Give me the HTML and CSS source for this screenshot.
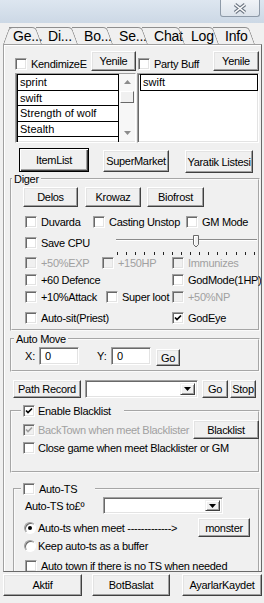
FILE: index.html
```html
<!DOCTYPE html>
<html lang="tr">

<head>
    <meta charset="UTF-8">
    <meta name="viewport" content="width=device-width, initial-scale=1.0">
    <title>Bot</title>
    <link rel="stylesheet" href="styles.css">
</head>

<body>
    <div class="titlebar">
        <div class="close">
            <svg width="16" height="11" viewBox="0 0 16 11">
                <path d="M3 1.5 13 9.5M13 1.5 3 9.5" stroke="#6d7784" stroke-width="3.6" />
                <path d="M3 1.5 13 9.5M13 1.5 3 9.5" stroke="#fff" stroke-width="1.6" />
            </svg>
        </div>
    </div>

    <div class="tabs">
        <span class="tab tab-ge">Ge...</span>
        <span class="tab tab-di">Di...</span>
        <span class="tab tab-bo">Bo...</span>
        <span class="tab tab-se">Se...</span>
        <span class="tab tab-chat">Chat</span>
        <span class="tab tab-log">Log</span>
        <span class="tab tab-info">Info</span>
    </div>

    <div class="panel">
        <div class="row row-top">
            <label class="chk w-kend"><span class="box"></span>KendimizeE</label>
            <button class="btn b-yen1">Yenile</button>
            <label class="chk w-party"><span class="box"></span>Party Buff</label>
            <button class="btn b-yen2">Yenile</button>
        </div>

        <div class="row lists">
            <div class="list list-l">
                <div class="items">
                    <div class="item">sprint</div>
                    <div class="item">swift</div>
                    <div class="item">Strength of wolf</div>
                    <div class="item">Stealth</div>
                    <div class="item"></div>
                </div>
                <div class="sbar">
                    <span class="sb-arr"><svg width="7" height="4"><path d="M0 4h7L3.5 0z" fill="#8c8c8c" /></svg></span>
                    <span class="sb-thumb"></span>
                    <span class="sb-arr sb-down"><svg width="7" height="4"><path d="M0 0h7L3.5 4z" fill="#8c8c8c" /></svg></span>
                </div>
            </div>
            <div class="list list-r">
                <div class="items">
                    <div class="item">swift</div>
                </div>
            </div>
        </div>

        <div class="row row-btns">
            <button class="btn btn-def b-item">ItemList</button>
            <button class="btn b-super">SuperMarket</button>
            <button class="btn b-yaratik">Yaratik Listesi</button>
        </div>

        <fieldset class="grp g-diger">
            <legend>Diger</legend>
            <div class="row d-btns">
                <button class="btn b-delos">Delos</button>
                <button class="btn b-krowaz">Krowaz</button>
                <button class="btn b-bio">Biofrost</button>
            </div>
            <div class="row crow cr1">
                <label class="chk c-duv"><span class="box"></span>Duvarda</label>
                <label class="chk c-cast"><span class="box"></span>Casting Unstop</label>
                <label class="chk"><span class="box"></span>GM Mode</label>
            </div>
            <div class="row crow cr2">
                <label class="chk c-save"><span class="box"></span>Save CPU</label>
                <svg class="slider" width="143" height="22" viewBox="0 0 143 22">
                    <path d="M1 5.5H142" stroke="#8a8a8a" />
                    <path d="M1 6.5H142" stroke="#fff" />
                    <path d="M78.5 1.5h5v9L81 13l-2.5-2.5z" fill="#f0f0f0" stroke="#696969" />
                    <path d="M79.5 10V2.5h3" fill="none" stroke="#fff" />
                    <path d="M2.5 18v3M11.5 18v3M20.5 18v3M29.5 18v3M39.5 18v3M48.5 18v3M57.5 18v3M66.5 18v3M75.5 18v3M84.5 18v3M93.5 18v3M102.5 18v3M111.5 18v3M121.5 18v3M130.5 18v3M139.5 18v3" stroke="#222" />
                </svg>
            </div>
            <div class="row crow cr3">
                <label class="chk off c-exp"><span class="box"></span>+50%EXP</label>
                <label class="chk off c-hp"><span class="box"></span>+150HP</label>
                <label class="chk off"><span class="box"></span>Immunizes</label>
            </div>
            <div class="row crow cr4">
                <label class="chk c-def"><span class="box"></span>+60 Defence</label>
                <label class="chk"><span class="box"></span>GodMode(1HP)</label>
            </div>
            <div class="row crow cr5">
                <label class="chk c-att"><span class="box"></span>+10%Attack</label>
                <label class="chk c-loot"><span class="box"></span>Super loot</label>
                <label class="chk off"><span class="box"></span>+50%NP</label>
            </div>
            <div class="row crow cr6">
                <label class="chk c-sit"><span class="box"></span>Auto-sit(Priest)</label>
                <label class="chk"><span class="box"><svg class="tick" width="8" height="8" viewBox="0 0 8 8"><path d="M1 3.5 3 5.5 7 1.5" /></svg></span>GodEye</label>
            </div>
        </fieldset>

        <fieldset class="grp g-move">
            <legend>Auto Move</legend>
            <div class="row m-row">
                <span class="m-x">X:</span>
                <div class="field in-xy">0</div>
                <span class="m-y">Y:</span>
                <div class="field in-xy">0</div>
                <button class="btn b-go">Go</button>
            </div>
        </fieldset>

        <div class="row p-row">
            <button class="btn b-path">Path Record</button>
            <div class="field combo cmb-path">
                <span class="drop"><svg width="7" height="4"><path d="M0 0h7L3.5 4z" /></svg></span>
            </div>
            <button class="btn b-go2">Go</button>
            <button class="btn b-stop">Stop</button>
        </div>

        <fieldset class="grp g-black">
            <legend>
                <label class="chk w-enable"><span class="box"><svg class="tick" width="8" height="8" viewBox="0 0 8 8"><path d="M1 3.5 3 5.5 7 1.5" /></svg></span>Enable Blacklist</label>
            </legend>
            <div class="row bl-row1">
                <label class="chk off c-back"><span class="box"><svg class="tick" width="8" height="8" viewBox="0 0 8 8"><path d="M1 3.5 3 5.5 7 1.5" /></svg></span>BackTown when meet Blacklister</label>
                <button class="btn b-black">Blacklist</button>
            </div>
            <div class="row crow bl-row2">
                <label class="chk c-close"><span class="box"></span>Close game when meet Blacklister or GM</label>
            </div>
        </fieldset>

        <fieldset class="grp g-ts">
            <legend>
                <label class="chk w-ats"><span class="box"></span>Auto-TS</label>
            </legend>
            <div class="row ts-row1">
                <span class="l-tsto">Auto-TS to£º</span>
                <div class="field combo cmb-ts">
                    <span class="drop"><svg width="7" height="4"><path d="M0 0h7L3.5 4z" /></svg></span>
                </div>
            </div>
            <div class="row ts-row2">
                <label class="chk rad r-meet"><span class="radio on"></span>Auto-ts when meet -------------&gt;</label>
                <button class="btn b-mon">monster</button>
            </div>
            <div class="row crow ts-row3">
                <label class="chk rad r-keep"><span class="radio"></span>Keep auto-ts as a buffer</label>
            </div>
            <div class="row crow ts-row4">
                <label class="chk c-town"><span class="box"></span>Auto town if there is no TS when needed</label>
            </div>
        </fieldset>
    </div>

    <div class="row bottom">
        <button class="btn b-aktif">Aktif</button>
        <button class="btn b-bot">BotBaslat</button>
        <button class="btn b-kaydet">AyarlarKaydet</button>
    </div>
</body>

</html>
```

FILE: styles.css
```css
* {
    box-sizing: border-box;
}

html,
body {
    margin: 0;
    padding: 0;
}

body {
    width: 264px;
    height: 603px;
    overflow: hidden;
    background: #f0f0f0;
    font-family: "Liberation Sans", Arial, sans-serif;
    font-size: 11px;
    color: #000;
}

button {
    font: inherit;
    color: inherit;
    margin: 0;
    padding: 0;
}

/* title bar */

.titlebar {
    display: flex;
    justify-content: flex-end;
    height: 23px;
    padding-right: 4px;
    background: linear-gradient(#dde6f0, #ccd8e5);
}

.close {
    display: flex;
    align-items: center;
    justify-content: center;
    width: 40px;
    height: 17px;
    border: 1px solid #8e9aa8;
    border-top: 0;
    border-radius: 0 0 3px 3px;
    background: linear-gradient(#f0f3f7, #dce3eb);
}

/* tabs */

.tabs {
    display: flex;
    height: 21px;
    padding: 4px 0 0 3px;
}

.tab {
    position: relative;
    flex: none;
    height: 17px;
    padding-left: 6px;
    font-size: 14px;
    line-height: 18px;
    letter-spacing: -0.2px;
    white-space: nowrap;
}

.tab::before {
    content: "";
    position: absolute;
    top: 0;
    right: 0;
    bottom: 0;
    left: 0;
    border-top: 1px solid #8f8f8f;
    border-right: 1px solid #8f8f8f;
    border-top-right-radius: 4px;
    transform: skewX(20deg);
    transform-origin: 100% 100%;
}

.tab-ge {
    width: 39px;
    padding-left: 10px;
}

.tab-ge::before {
    left: 12px;
}

.tab-ge::after {
    content: "";
    position: absolute;
    top: 0;
    bottom: 0;
    left: 0;
    width: 8px;
    border-top: 1px solid #8f8f8f;
    border-left: 1px solid #8f8f8f;
    border-top-left-radius: 4px;
    transform: skewX(-20deg);
    transform-origin: 0 100%;
}

.tab-di { width: 36px; }
.tab-bo { width: 35px; }
.tab-se { width: 35px; }
.tab-chat { width: 37px; }
.tab-log { width: 34px; }
.tab-info { width: 36px; }

/* panel */

.panel {
    width: 259px;
    height: 528px;
    margin-left: 3px;
    border: 1px solid;
    border-color: #a0a0a0 #696969 #696969 #a0a0a0;
    box-shadow: inset 1px 1px #fff;
    overflow: hidden;
}

.row {
    display: flex;
    align-items: center;
}

.row > * {
    flex: none;
}

/* controls */

.btn {
    display: flex;
    align-items: center;
    justify-content: center;
    background: #f0f0f0;
    border: 1px solid;
    border-color: #fff #404040 #404040 #fff;
    box-shadow: inset -1px -1px #a0a0a0, inset 1px 1px #e3e3e3;
    letter-spacing: -0.3px;
    white-space: nowrap;
}

.btn-def {
    border-color: #000;
    box-shadow: inset 1px 1px #fff, inset -1px -1px #404040, inset -2px -2px #a0a0a0;
}

.field {
    background: #fff;
    border: 1px solid;
    border-color: #a0a0a0 #fff #fff #a0a0a0;
    box-shadow: inset 1px 1px #696969, inset -1px -1px #e3e3e3;
}

.chk {
    display: flex;
    align-items: center;
    gap: 4px;
    height: 12px;
    letter-spacing: -0.3px;
    white-space: nowrap;
}

.chk.rad {
    gap: 2px;
}

.box {
    display: flex;
    align-items: center;
    justify-content: center;
    flex: none;
    width: 12px;
    height: 12px;
    background: #fff;
    border: 1px solid;
    border-color: #a0a0a0 #fff #fff #a0a0a0;
    box-shadow: inset 1px 1px #696969, inset -1px -1px #e3e3e3;
}

.tick path {
    fill: none;
    stroke: #000;
    stroke-width: 1.7;
}

.chk.off {
    color: #a0a0a0;
}

.chk.off .box {
    background: #f0f0f0;
}

.chk.off .tick path {
    stroke: #a0a0a0;
}

.radio {
    display: flex;
    align-items: center;
    justify-content: center;
    flex: none;
    width: 12px;
    height: 12px;
    border-radius: 50%;
    background: #fff;
    border: 1px solid;
    border-color: #a0a0a0 #fff #fff #a0a0a0;
    box-shadow: inset 1px 1px #696969;
}

.radio.on::after {
    content: "";
    width: 4px;
    height: 4px;
    border-radius: 50%;
    background: #000;
}

.combo {
    display: flex;
    justify-content: flex-end;
    padding: 2px;
}

.drop {
    display: flex;
    align-items: center;
    justify-content: center;
    width: 15px;
    background: #f0f0f0;
    border: 1px solid;
    border-color: #f0f0f0 #404040 #404040 #f0f0f0;
    box-shadow: inset 1px 1px #fff, inset -1px -1px #a0a0a0;
}

/* top rows */

.row-top {
    height: 20px;
    margin-top: 6px;
    align-items: flex-end;
}

.w-kend {
    width: 76px;
    margin-left: 11px;
    margin-bottom: 1px;
}

.b-yen1 {
    width: 45px;
    height: 20px;
}

.w-party {
    width: 75px;
    margin-left: 2px;
    margin-bottom: 1px;
}

.b-yen2 {
    width: 46px;
    height: 20px;
}

.lists {
    height: 70px;
    margin-top: 2px;
    align-items: stretch;
}

.list {
    display: flex;
    height: 70px;
    padding: 0 0 1px 1px;
    overflow: hidden;
    background: #fff;
    border: 1px solid;
    border-color: #a0a0a0 #fff #fff #a0a0a0;
    box-shadow: inset 1px 1px #696969, inset -1px -1px #e3e3e3;
}

.list-l {
    width: 121px;
    margin-left: 11px;
}

.list-r {
    width: 122px;
    margin-left: 1px;
    padding-left: 2px;
}

.items {
    flex: 1;
    display: flex;
    flex-direction: column;
    min-width: 0;
}

.item {
    flex: none;
    height: 17px;
    margin-bottom: -1px;
    padding-left: 2px;
    border: 1px solid #000;
    line-height: 15px;
    white-space: nowrap;
}

.item:nth-child(even) {
    height: 16px;
}

.sbar {
    display: flex;
    flex-direction: column;
    width: 16px;
    background: #f7f7f7;
}

.sb-arr {
    display: flex;
    align-items: center;
    justify-content: center;
    height: 16px;
}

.sb-down {
    margin-top: auto;
}

.sb-thumb {
    height: 12px;
    margin: 1px 1px 0;
    background: #f0f0f0;
    border: 1px solid;
    border-color: #fff #696969 #696969 #fff;
}

.row-btns {
    height: 24px;
    margin-top: 5px;
    align-items: flex-start;
}

.b-item {
    width: 70px;
    height: 24px;
    margin-left: 15px;
}

.b-super {
    width: 66px;
    height: 22px;
    margin: 2px 0 0 14px;
}

.b-yaratik {
    width: 68px;
    height: 23px;
    margin: 2px 0 0 16px;
}

/* group frames */

.grp {
    margin: 0;
    padding: 0;
    min-inline-size: 0;
    border: 2px groove #fafafa;
}

.grp legend {
    height: 14px;
    padding: 0 2px;
    line-height: 14px;
    letter-spacing: -0.3px;
}

.g-diger {
    width: 250px;
    margin-left: 6px;
    padding-bottom: 5px;
}

.d-btns {
    height: 20px;
    margin-top: 1px;
}

.d-btns .btn {
    height: 20px;
}

.b-delos {
    width: 55px;
    margin-left: 11px;
}

.b-krowaz {
    width: 56px;
    margin-left: 7px;
}

.b-bio {
    width: 57px;
    margin-left: 6px;
}

.crow {
    height: 12px;
}

.crow > .chk:first-child {
    margin-left: 13px;
}

.cr1 { margin-top: 9px; }
.cr2 { margin-top: 9px; align-items: flex-start; }
.cr3 { margin-top: 8px; }
.cr4 { margin-top: 5px; }
.cr5 { margin-top: 5px; }
.cr6 { margin-top: 9px; }

.c-duv { width: 68px; }
.c-cast { width: 93px; }
.c-save { width: 90px; }
.c-exp { width: 77px; }
.c-hp { width: 70px; }
.c-def { width: 147px; }
.c-att { width: 81px; }
.c-loot { width: 66px; }
.c-sit { width: 147px; }

.slider {
    margin-top: -3px;
}

.g-move {
    width: 250px;
    margin: 1px 0 0 6px;
    padding-bottom: 5px;
}

.g-move legend {
    margin-left: 2px;
}

.m-row {
    height: 18px;
    margin-top: 1px;
    align-items: flex-start;
}

.m-x,
.m-y {
    width: 14px;
    line-height: 18px;
}

.m-x {
    margin-left: 13px;
}

.m-y {
    margin-left: 18px;
}

.in-xy {
    width: 40px;
    height: 18px;
    padding-left: 5px;
    line-height: 16px;
}

.b-go {
    width: 24px;
    height: 17px;
    margin: 2px 0 0 5px;
}

.p-row {
    height: 18px;
    margin-top: 8px;
    align-items: stretch;
}

.b-path {
    width: 68px;
    margin-left: 9px;
}

.cmb-path {
    width: 113px;
    margin-left: 4px;
}

.b-go2 {
    width: 26px;
    margin-left: 4px;
}

.b-stop {
    width: 26px;
    margin-left: 2px;
}

.g-black {
    width: 250px;
    margin: 6px 0 0 6px;
    padding-bottom: 17px;
}

.g-black legend,
.g-ts legend {
    display: flex;
    align-items: center;
}

.g-black legend {
    margin-left: 9px;
}

.w-enable {
    width: 99px;
    gap: 3px;
}

.bl-row1 {
    height: 19px;
    margin-top: 2px;
}

.c-back {
    width: 170px;
    margin-left: 11px;
    gap: 3px;
}

.b-black {
    width: 66px;
    height: 19px;
}

.bl-row2 {
    margin-top: 3px;
}

.bl-row2 > .chk:first-child {
    margin-left: 11px;
    gap: 3px;
}

.g-ts {
    width: 247px;
    margin: 9px 0 0 9px;
    padding-bottom: 10px;
}

.g-ts legend {
    margin-left: 6px;
}

.w-ats {
    width: 70px;
}

.ts-row1 {
    height: 17px;
    margin-top: 1px;
}

.l-tsto {
    width: 78px;
    margin-left: 10px;
    letter-spacing: -0.3px;
}

.cmb-ts {
    width: 120px;
    height: 17px;
}

.ts-row2 {
    height: 19px;
    margin-top: 4px;
}

.r-meet {
    width: 174px;
    margin-left: 9px;
}

.b-mon {
    width: 52px;
    height: 19px;
}

.ts-row3 {
    margin-top: 3px;
}

.ts-row3 > .chk:first-child {
    margin-left: 9px;
}

.ts-row4 {
    margin-top: 8px;
}

.ts-row4 > .chk:first-child {
    margin-left: 10px;
}

/* bottom buttons */

.bottom {
    height: 22px;
    margin-top: 2px;
    align-items: stretch;
}

.b-aktif {
    width: 79px;
    margin-left: 3px;
}

.b-bot {
    width: 78px;
    margin-left: 10px;
}

.b-kaydet {
    width: 80px;
    margin-left: 12px;
}
```
